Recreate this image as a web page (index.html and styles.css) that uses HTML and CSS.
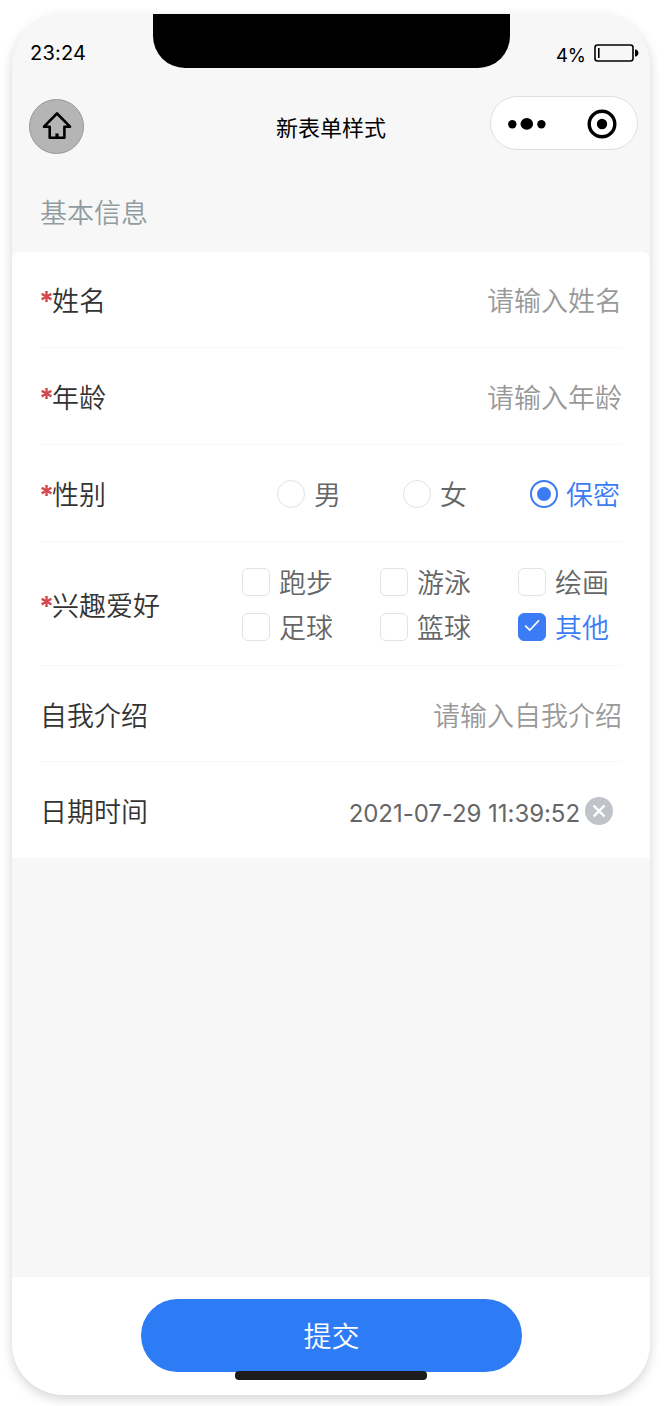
FILE: index.html
```
<!DOCTYPE html>
<html lang="zh-CN">
<head>
  <meta charset="UTF-8" />
  <meta name="viewport" content="width=device-width, initial-scale=1.0"/>
  <title>新表单样式</title>
  <link rel="stylesheet" href="styles.css">
</head>
<body>

  <div class="phone">
    <div class="notch"></div>

    <div class="status-bar">
      <span class="time">23:24</span>
      <div class="battery">
        <span>4%</span>
        <svg width="45" height="19" viewBox="0 0 45 19">
          <rect x="1" y="1" width="38" height="16" rx="2.5" fill="none" stroke="#000" stroke-width="1.6"/>
          <rect x="4" y="4" width="1.6" height="10" fill="#000"/>
          <path d="M41 5.5h1.2q2.3 1 2.3 3.5t-2.3 3.5H41z" fill="#000"/>
        </svg>
      </div>
    </div>

    <nav>
      <a href="#" class="home">
        <svg width="30" height="30" viewBox="0 0 30 30" fill="none" stroke="#000" stroke-width="2.6" stroke-linejoin="round">
          <path d="M15 2.5L2 15.7h5.7v11.1h14.7V15.7H28z"/>
          <path d="M15 22.5v4" stroke-width="3.2"/>
        </svg>
      </a>
      <h1>新表单样式</h1>
      <div class="capsule">
        <svg width="38" height="14" viewBox="0 0 38 14">
          <circle cx="4.3" cy="7.3" r="4.2"/>
          <ellipse cx="18.8" cy="6.9" rx="6.3" ry="5.8"/>
          <circle cx="33.4" cy="7.3" r="4.2"/>
        </svg>
        <svg width="30" height="30" viewBox="0 0 30 30">
          <circle cx="15" cy="15" r="12.8" fill="none" stroke="#000" stroke-width="3.4"/>
          <circle cx="15" cy="15" r="5.2"/>
        </svg>
      </div>
    </nav>

    <h2>基本信息</h2>

    <form>
      <div class="row">
        <label class="required">姓名</label>
        <span class="placeholder">请输入姓名</span>
      </div>

      <div class="row">
        <label class="required">年龄</label>
        <span class="placeholder">请输入年龄</span>
      </div>

      <div class="row">
        <label class="required">性别</label>
        <div class="radios">
          <span class="option"><i class="radio"></i>男</span>
          <span class="option"><i class="radio"></i>女</span>
          <span class="option checked"><i class="radio"></i>保密</span>
        </div>
      </div>

      <div class="row hobby">
        <label class="required">兴趣爱好</label>
        <div class="checkboxes">
          <span class="option"><i class="box"></i>跑步</span>
          <span class="option"><i class="box"></i>游泳</span>
          <span class="option"><i class="box"></i>绘画</span>
          <span class="option"><i class="box"></i>足球</span>
          <span class="option"><i class="box"></i>篮球</span>
          <span class="option checked">
            <i class="box">
              <svg width="28" height="28" viewBox="0 0 28 28" fill="none" stroke="#fff" stroke-width="1.6">
                <path d="M7.2 12.6l4.6 4.4L21 7.4"/>
              </svg>
            </i>其他
          </span>
        </div>
      </div>

      <div class="row">
        <label>自我介绍</label>
        <span class="placeholder">请输入自我介绍</span>
      </div>

      <div class="row">
        <label>日期时间</label>
        <div class="date">
          <span>2021-07-29 11:39:52</span>
          <svg width="28" height="28" viewBox="0 0 28 28">
            <circle cx="14" cy="14" r="14" fill="#c0c4c9"/>
            <path d="M8.5 8.5l11 11M19.5 8.5l-11 11" stroke="#fff" stroke-width="2.4"/>
          </svg>
        </div>
      </div>
    </form>

    <footer>
      <button type="button">提交</button>
      <div class="home-indicator"></div>
    </footer>
  </div>

</body>
</html>
```
FILE: styles.css
```
:root {
  --bg-color: #f7f7f7;
  --primary: #3b7cf6;
  --text-color: #333;
  --secondary-text: #666;
  --placeholder: #999;
  --required: #d1484d;
}

* {
  margin: 0;
  padding: 0;
  box-sizing: border-box;
}

body {
  height: 1406px;
  padding: 14px 14px 11px 12px;
  overflow: hidden;
  font-family: Inter, "Noto Sans CJK SC", sans-serif;
  font-weight: 350;
  background-color: #fff;
  color: var(--text-color);
}

.phone {
  position: relative;
  display: flex;
  flex-direction: column;
  height: 1381px;
  border-radius: 52px;
  overflow: hidden;
  background-color: var(--bg-color);
  box-shadow: 0 4px 12px rgba(0, 0, 0, 0.17);
}

.notch {
  position: absolute;
  top: 0;
  left: 141px;
  width: 357px;
  height: 54px;
  border-radius: 0 0 32px 32px;
  background-color: #000;
}

.status-bar {
  display: flex;
  justify-content: space-between;
  align-items: center;
  height: 78px;
  padding: 0 11px 0 18px;
  color: #000;
  font-weight: 400;
}

.time {
  font-size: 20px;
  letter-spacing: 0.2px;
}

.battery {
  display: flex;
  align-items: center;
  gap: 8px;
  font-size: 18.5px;
}

.battery span {
  padding-top: 4px;
}

nav {
  display: flex;
  justify-content: space-between;
  align-items: center;
  height: 64px;
  padding: 0 12px 0 17px;
}

.home {
  display: flex;
  justify-content: center;
  align-items: center;
  width: 55px;
  height: 55px;
  margin-top: 4px;
  border: 1px solid #979797;
  border-radius: 50%;
  background-color: #b5b5b5;
}

nav h1 {
  margin: 7px 0 0 88px;
  font-size: 22px;
  font-weight: 400;
  line-height: 32px;
  color: #000;
}

.capsule {
  display: flex;
  justify-content: space-between;
  align-items: center;
  width: 148px;
  height: 54px;
  margin-bottom: 2px;
  padding: 1px 20px 0 17px;
  border: 1.5px solid #dedede;
  border-radius: 27px;
  background-color: #fff;
}

h2 {
  height: 96px;
  padding-left: 28px;
  font-size: 27px;
  font-weight: 350;
  line-height: 115px;
  color: #909ca0;
}

form {
  padding: 0 27px 0 28px;
  border-radius: 8px 8px 0 0;
  background-color: #fff;
  font-size: 27px;
}

.row {
  display: flex;
  justify-content: space-between;
  align-items: center;
  height: 97px;
  border-bottom: 1px solid #f8f8f8;
  line-height: 40px;
}

.row:first-child,
.row:nth-child(5),
.row:last-child {
  height: 96px;
}

.row:last-child {
  border-bottom: none;
}

.row.hobby {
  height: 124px;
}

.row label,
.placeholder {
  padding-top: 6px;
}

.row:first-child label,
.row:first-child .placeholder {
  padding-top: 4px;
}

.required::before {
  content: "*";
  display: inline-block;
  width: 12px;
  margin-left: -1px;
  margin-right: 1px;
  font-weight: 700;
  color: var(--required);
}

.placeholder {
  padding-right: 1px;
  color: var(--placeholder);
}

.option {
  display: flex;
  align-items: center;
  gap: 9px;
  padding-top: 5px;
  color: var(--secondary-text);
}

.option.checked {
  color: var(--primary);
}

.radios {
  display: flex;
  gap: 62px;
  padding-right: 3px;
}

.radio,
.box {
  width: 28px;
  height: 28px;
  margin-top: -4px;
  border: 1.5px solid #e2e2e2;
  background-color: #fff;
}

.radio {
  display: flex;
  justify-content: center;
  align-items: center;
  border-radius: 50%;
}

.box {
  border-radius: 6px;
}

.box svg {
  display: block;
  margin: -1px;
}

.checked .radio {
  margin-left: 1px;
  margin-right: -1px;
  border: 2px solid var(--primary);
}

.checked .radio::before {
  content: "";
  width: 14px;
  height: 14px;
  border-radius: 50%;
  background-color: var(--primary);
}

.checked .box {
  border-color: var(--primary);
  background-color: var(--primary);
}

.checkboxes {
  display: grid;
  grid-template-columns: 138px 138px 105px;
}

.date {
  display: flex;
  align-items: center;
  gap: 5px;
  padding: 2px 10px 0 0;
  font-size: 24px;
  font-weight: 400;
  letter-spacing: -0.05px;
  color: var(--secondary-text);
}

.date span {
  padding-top: 5px;
}

footer {
  position: relative;
  height: 118px;
  margin-top: auto;
  padding-top: 22px;
  background-color: #fff;
}

footer button {
  display: block;
  width: 381px;
  height: 73px;
  margin-left: 129px;
  border: none;
  border-radius: 37px;
  background-color: #2d7cf6;
  color: #fff;
  font: 350 28px/73px "Noto Sans CJK SC", sans-serif;
  cursor: pointer;
}

.home-indicator {
  position: absolute;
  top: 94px;
  left: 223px;
  width: 192px;
  height: 9px;
  border-radius: 4px;
  background-color: #1c1c1c;
}
```
